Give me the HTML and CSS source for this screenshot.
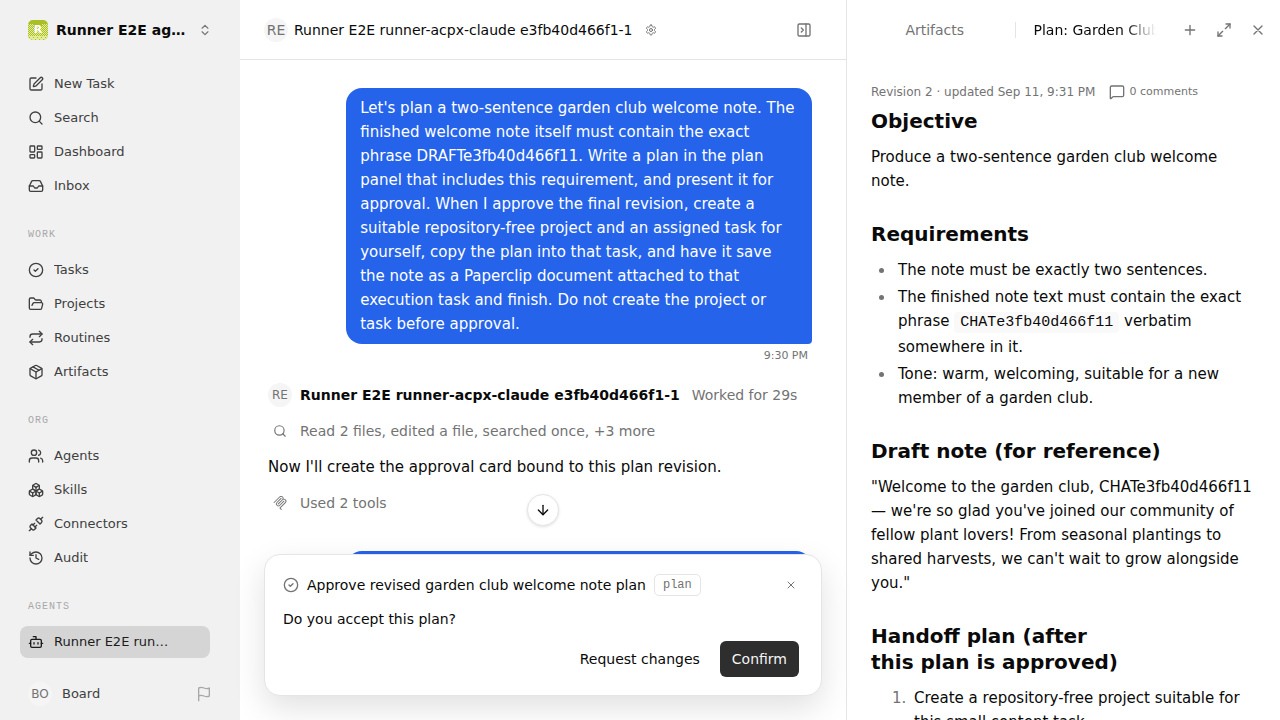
FILE: index.html
```html
<!DOCTYPE html>
<html lang="en">
<head>
    <meta charset="UTF-8">
    <meta name="viewport" content="width=device-width, initial-scale=1.0">
    <title>Runner E2E</title>
    <link rel="stylesheet" href="styles.css">
</head>
<body>
    <div class="app">
        <aside class="sidebar">
            <button type="button" class="workspace">
                <svg class="logo" viewBox="0 0 20 20">
                    <defs>
                        <pattern id="dotsLight" width="2" height="2" patternUnits="userSpaceOnUse">
                            <rect width="1" height="1" fill="#e3ec96"/>
                            <rect x="1" y="1" width="1" height="1" fill="#e3ec96"/>
                        </pattern>
                        <pattern id="dotsDark" width="4" height="4" patternUnits="userSpaceOnUse">
                            <rect x="1" y="1" width="1" height="1" fill="#aabf25"/>
                            <rect x="3" y="3" width="1" height="1" fill="#aabf25"/>
                        </pattern>
                        <clipPath id="logoShape"><rect width="20" height="20" rx="5"/></clipPath>
                    </defs>
                    <g clip-path="url(#logoShape)">
                        <rect width="20" height="20" fill="#aabf25"/>
                        <path d="M0 4h6v3h8V4h6v12H0z" fill="url(#dotsLight)"/>
                        <rect y="16" width="20" height="4" fill="#e3ec96"/>
                        <rect y="16" width="20" height="4" fill="url(#dotsDark)"/>
                    </g>
                    <text x="10" y="13" text-anchor="middle" class="logo-letter">R</text>
                </svg>
                <span class="workspace-name">Runner E2E agents</span>
                <svg class="icon chevrons" viewBox="0 0 24 24"><path d="m7 15 5 5 5-5M7 9l5-5 5 5"/></svg>
            </button>

            <nav class="nav">
                <a href="#" class="nav-item">
                    <svg class="icon" viewBox="0 0 24 24"><path d="M12 3H5a2 2 0 0 0-2 2v14a2 2 0 0 0 2 2h14a2 2 0 0 0 2-2v-7"/><path d="M18.375 2.625a1 1 0 0 1 3 3l-9.013 9.014a2 2 0 0 1-.853.505l-2.873.84a.5.5 0 0 1-.62-.62l.84-2.873a2 2 0 0 1 .506-.852z"/></svg>
                    <span>New Task</span>
                </a>
                <a href="#" class="nav-item">
                    <svg class="icon" viewBox="0 0 24 24"><circle cx="11" cy="11" r="8"/><path d="m21 21-4.3-4.3"/></svg>
                    <span>Search</span>
                </a>
                <a href="#" class="nav-item">
                    <svg class="icon" viewBox="0 0 24 24"><rect width="7" height="9" x="3" y="3" rx="1"/><rect width="7" height="5" x="14" y="3" rx="1"/><rect width="7" height="9" x="14" y="12" rx="1"/><rect width="7" height="5" x="3" y="16" rx="1"/></svg>
                    <span>Dashboard</span>
                </a>
                <a href="#" class="nav-item">
                    <svg class="icon" viewBox="0 0 24 24"><path d="M22 12h-6l-2 3h-4l-2-3H2"/><path d="M5.45 5.11 2 12v6a2 2 0 0 0 2 2h16a2 2 0 0 0 2-2v-6l-3.45-6.89A2 2 0 0 0 16.76 4H7.24a2 2 0 0 0-1.79 1.11z"/></svg>
                    <span>Inbox</span>
                </a>

                <h2 class="nav-label">Work</h2>
                <a href="#" class="nav-item">
                    <svg class="icon" viewBox="0 0 24 24"><circle cx="12" cy="12" r="10"/><path d="m9 12 2 2 4-4"/></svg>
                    <span>Tasks</span>
                </a>
                <a href="#" class="nav-item">
                    <svg class="icon" viewBox="0 0 24 24"><path d="m6 14 1.5-2.9A2 2 0 0 1 9.24 10H20a2 2 0 0 1 1.94 2.5l-1.54 6a2 2 0 0 1-1.95 1.5H4a2 2 0 0 1-2-2V5a2 2 0 0 1 2-2h3.9a2 2 0 0 1 1.69.9l.81 1.2a2 2 0 0 0 1.67.9H18a2 2 0 0 1 2 2v2"/></svg>
                    <span>Projects</span>
                </a>
                <a href="#" class="nav-item">
                    <svg class="icon" viewBox="0 0 24 24"><path d="m17 2 4 4-4 4"/><path d="M3 11v-1a4 4 0 0 1 4-4h14"/><path d="m7 22-4-4 4-4"/><path d="M21 13v1a4 4 0 0 1-4 4H3"/></svg>
                    <span>Routines</span>
                </a>
                <a href="#" class="nav-item">
                    <svg class="icon" viewBox="0 0 24 24"><path d="m7.5 4.27 9 5.15"/><path d="M21 8a2 2 0 0 0-1-1.73l-7-4a2 2 0 0 0-2 0l-7 4A2 2 0 0 0 3 8v8a2 2 0 0 0 1 1.73l7 4a2 2 0 0 0 2 0l7-4A2 2 0 0 0 21 16Z"/><path d="m3.3 7 8.7 5 8.7-5"/><path d="M12 22V12"/></svg>
                    <span>Artifacts</span>
                </a>

                <h2 class="nav-label">Org</h2>
                <a href="#" class="nav-item">
                    <svg class="icon" viewBox="0 0 24 24"><path d="M16 21v-2a4 4 0 0 0-4-4H6a4 4 0 0 0-4 4v2"/><circle cx="9" cy="7" r="4"/><path d="M22 21v-2a4 4 0 0 0-3-3.87"/><path d="M16 3.13a4 4 0 0 1 0 7.75"/></svg>
                    <span>Agents</span>
                </a>
                <a href="#" class="nav-item">
                    <svg class="icon" viewBox="0 0 24 24"><path d="M2.97 12.92A2 2 0 0 0 2 14.63v3.24a2 2 0 0 0 .97 1.71l3 1.8a2 2 0 0 0 2.06 0L12 19v-5.5l-5-3-4.03 2.42Z"/><path d="m7 16.5-4.74-2.85"/><path d="m7 16.5 5-3"/><path d="M7 16.5v5.17"/><path d="M12 13.5V19l3.97 2.38a2 2 0 0 0 2.06 0l3-1.8a2 2 0 0 0 .97-1.71v-3.24a2 2 0 0 0-.97-1.71L17 10.5l-5 3Z"/><path d="m17 16.5-5-3"/><path d="m17 16.5 4.74-2.85"/><path d="M17 16.5v5.17"/><path d="M7.97 4.42A2 2 0 0 0 7 6.13v4.37l5 3 5-3V6.13a2 2 0 0 0-.97-1.71l-3-1.8a2 2 0 0 0-2.06 0l-3 1.8Z"/><path d="M12 8 7.26 5.15"/><path d="m12 8 4.74-2.85"/><path d="M12 13.5V8"/></svg>
                    <span>Skills</span>
                </a>
                <a href="#" class="nav-item">
                    <svg class="icon" viewBox="0 0 24 24"><path d="m19 5 3-3"/><path d="m2 22 3-3"/><path d="M6.3 20.3a2.4 2.4 0 0 0 3.4 0L12 18l-6-6-2.3 2.3a2.4 2.4 0 0 0 0 3.4Z"/><path d="M7.5 13.5 10 11"/><path d="M10.5 16.5 13 14"/><path d="m12 6 6 6 2.3-2.3a2.4 2.4 0 0 0 0-3.4l-2.6-2.6a2.4 2.4 0 0 0-3.4 0Z"/></svg>
                    <span>Connectors</span>
                </a>
                <a href="#" class="nav-item">
                    <svg class="icon" viewBox="0 0 24 24"><path d="M3 12a9 9 0 1 0 9-9 9.75 9.75 0 0 0-6.74 2.74L3 8"/><path d="M3 3v5h5"/><path d="M12 7v5l4 2"/></svg>
                    <span>Audit</span>
                </a>

                <h2 class="nav-label">Agents</h2>
                <a href="#" class="nav-item active">
                    <svg class="icon" viewBox="0 0 24 24"><path d="M12 8V4H8"/><rect width="16" height="12" x="4" y="8" rx="2"/><path d="M2 14h2M20 14h2M15 13v2M9 13v2"/></svg>
                    <span>Runner E2E runner-acpx-claude</span>
                </a>
            </nav>

            <div class="account">
                <span class="avatar">BO</span>
                <span class="account-name">Board</span>
                <svg class="icon flag" viewBox="0 0 24 24"><path d="M4 15s1-1 4-1 5 2 8 2 4-1 4-1V3s-1 1-4 1-5-2-8-2-4 1-4 1z"/><path d="M4 22v-7"/></svg>
            </div>
        </aside>

        <main class="chat">
            <header class="chat-header">
                <span class="avatar">RE</span>
                <h1>Runner E2E runner-acpx-claude e3fb40d466f1-1</h1>
                <button type="button" class="icon-button small" aria-label="Agent settings">
                    <svg class="icon" viewBox="0 0 24 24"><path d="M12.22 2h-.44a2 2 0 0 0-2 2v.18a2 2 0 0 1-1 1.73l-.43.25a2 2 0 0 1-2 0l-.15-.08a2 2 0 0 0-2.73.73l-.22.38a2 2 0 0 0 .73 2.73l.15.1a2 2 0 0 1 1 1.72v.51a2 2 0 0 1-1 1.74l-.15.09a2 2 0 0 0-.73 2.73l.22.38a2 2 0 0 0 2.73.73l.15-.08a2 2 0 0 1 2 0l.43.25a2 2 0 0 1 1 1.73V20a2 2 0 0 0 2 2h.44a2 2 0 0 0 2-2v-.18a2 2 0 0 1 1-1.73l.43-.25a2 2 0 0 1 2 0l.15.08a2 2 0 0 0 2.73-.73l.22-.39a2 2 0 0 0-.73-2.73l-.15-.08a2 2 0 0 1-1-1.74v-.5a2 2 0 0 1 1-1.74l.15-.09a2 2 0 0 0 .73-2.73l-.22-.38a2 2 0 0 0-2.73-.73l-.15.08a2 2 0 0 1-2 0l-.43-.25a2 2 0 0 1-1-1.73V4a2 2 0 0 0-2-2z"/><circle cx="12" cy="12" r="3"/></svg>
                </button>
                <button type="button" class="icon-button push" aria-label="Toggle panel">
                    <svg class="icon" viewBox="0 0 24 24"><rect width="18" height="18" x="3" y="3" rx="2"/><path d="M15 3v18"/><path d="m8 9 3 3-3 3"/></svg>
                </button>
            </header>

            <div class="thread">
                <div class="bubble">Let's plan a two-sentence garden club welcome note. The finished welcome note itself must contain the exact phrase DRAFTe3fb40d466f11. Write a plan in the plan panel that includes this requirement, and present it for approval. When I approve the final revision, create a suitable repository-free project and an assigned task for yourself, copy the plan into that task, and have it save the note as a Paperclip document attached to that execution task and finish. Do not create the project or task before approval.</div>
                <time class="sent-at">9:30 PM</time>

                <div class="row reply-head">
                    <span class="avatar">RE</span>
                    <strong>Runner E2E runner-acpx-claude e3fb40d466f1-1</strong>
                    <span class="worked">Worked for 29s</span>
                </div>
                <div class="row step">
                    <svg class="icon" viewBox="0 0 24 24"><circle cx="11" cy="11" r="8"/><path d="m21 21-4.3-4.3"/></svg>
                    <span>Read 2 files, edited a file, searched once, +3 more</span>
                </div>
                <p class="reply">Now I'll create the approval card bound to this plan revision.</p>
                <div class="row step">
                    <svg class="icon solid" viewBox="0 0 24 24"><path d="M15.688 2.343a2.588 2.588 0 00-3.61 0l-9.626 9.44a.863.863 0 01-1.203 0 .823.823 0 010-1.18l9.626-9.44a4.313 4.313 0 016.016 0 4.116 4.116 0 011.204 3.54 4.3 4.3 0 013.609 1.18l.05.05a4.115 4.115 0 010 5.9l-8.706 8.537a.274.274 0 000 .393l1.788 1.754a.823.823 0 010 1.18.863.863 0 01-1.203 0l-1.788-1.753a1.92 1.92 0 010-2.754l8.706-8.538a2.47 2.47 0 000-3.54l-.05-.049a2.588 2.588 0 00-3.607-.003l-7.172 7.034-.002.002-.098.097a.863.863 0 01-1.204 0 .823.823 0 010-1.18l7.273-7.133a2.47 2.47 0 00-.003-3.537z"/><path d="M14.485 4.703a.823.823 0 000-1.18.863.863 0 00-1.204 0l-7.119 6.982a4.115 4.115 0 000 5.9 4.314 4.314 0 006.016 0l7.12-6.982a.823.823 0 000-1.18.863.863 0 00-1.204 0l-7.119 6.982a2.588 2.588 0 01-3.61 0 2.47 2.47 0 010-3.54l7.12-6.982z"/></svg>
                    <span>Used 2 tools</span>
                </div>
                <div class="bubble next"></div>
            </div>

            <div class="dock">
                <button type="button" class="scroll-down" aria-label="Scroll to latest">
                    <svg class="icon" viewBox="0 0 24 24"><path d="M12 5v14"/><path d="m19 12-7 7-7-7"/></svg>
                </button>
                <section class="approval">
                    <div class="approval-head">
                        <svg class="icon muted" viewBox="0 0 24 24"><circle cx="12" cy="12" r="10"/><path d="m9 12 2 2 4-4"/></svg>
                        <span>Approve revised garden club welcome note plan</span>
                        <span class="tag">plan</span>
                        <button type="button" class="icon-button small push" aria-label="Dismiss">
                            <svg class="icon" viewBox="0 0 24 24"><path d="M18 6 6 18M6 6l12 12"/></svg>
                        </button>
                    </div>
                    <p>Do you accept this plan?</p>
                    <div class="actions">
                        <button type="button" class="btn">Request changes</button>
                        <button type="button" class="btn primary">Confirm</button>
                    </div>
                </section>
            </div>
        </main>

        <aside class="panel">
            <header class="panel-header">
                <div class="tabs">
                    <button type="button" class="tab">Artifacts</button>
                    <button type="button" class="tab current"><span>Plan: Garden Club Welcome Note</span></button>
                </div>
                <div class="panel-tools">
                    <button type="button" class="icon-button" aria-label="Add tab">
                        <svg class="icon" viewBox="0 0 24 24"><path d="M5 12h14M12 5v14"/></svg>
                    </button>
                    <button type="button" class="icon-button" aria-label="Expand">
                        <svg class="icon" viewBox="0 0 24 24"><path d="M15 3h6v6"/><path d="m21 3-7 7"/><path d="m3 21 7-7"/><path d="M9 21H3v-6"/></svg>
                    </button>
                    <button type="button" class="icon-button" aria-label="Close panel">
                        <svg class="icon" viewBox="0 0 24 24"><path d="M18 6 6 18M6 6l12 12"/></svg>
                    </button>
                </div>
            </header>

            <article class="document">
                <div class="meta">
                    <span>Revision 2 · updated Sep 11, 9:31 PM</span>
                    <button type="button" class="comments">
                        <svg class="icon" viewBox="0 0 24 24"><path d="M22 17a2 2 0 0 1-2 2H6.828a2 2 0 0 0-1.414.586l-2.202 2.202A.71.71 0 0 1 2 21.286V5a2 2 0 0 1 2-2h16a2 2 0 0 1 2 2z"/></svg>
                        0 comments
                    </button>
                </div>
                <h2>Objective</h2>
                <p>Produce a two-sentence garden club welcome note.</p>
                <h2>Requirements</h2>
                <ul>
                    <li>The note must be exactly two sentences.</li>
                    <li>The finished note text must contain the exact phrase <code>CHATe3fb40d466f11</code> verbatim somewhere in it.</li>
                    <li>Tone: warm, welcoming, suitable for a new member of a garden club.</li>
                </ul>
                <h2>Draft note (for reference)</h2>
                <p>"Welcome to the garden club, CHATe3fb40d466f11 — we're so glad you've joined our community of fellow plant lovers! From seasonal plantings to shared harvests, we can't wait to grow alongside you."</p>
                <h2>Handoff plan (after this plan is approved)</h2>
                <ol>
                    <li>Create a repository-free project suitable for this small content task.</li>
                </ol>
            </article>
        </aside>
    </div>
</body>
</html>
```

FILE: styles.css
```css
* {
    box-sizing: border-box;
}

body {
    margin: 0;
    background-color: white;
    color: #0a0a0a;
    font-family: "DejaVu Sans", sans-serif;
    font-size: 14px;
    line-height: 20px;
}

h1, h2, p, ul, ol {
    margin: 0;
    padding: 0;
}

button {
    font: inherit;
    color: inherit;
    background: none;
    border: none;
    padding: 0;
    cursor: pointer;
}

.app {
    display: grid;
    grid-template-columns: 240px minmax(0, 1fr) 434px;
    height: 100vh;
    overflow: hidden;
}

.icon {
    width: 16px;
    height: 16px;
    flex: none;
    fill: none;
    stroke: currentColor;
    stroke-width: 2;
    stroke-linecap: round;
    stroke-linejoin: round;
}

.icon.solid {
    fill: currentColor;
    stroke: none;
}

.muted {
    color: #737373;
}

.avatar {
    display: flex;
    align-items: center;
    justify-content: center;
    flex: none;
    width: 24px;
    height: 24px;
    border-radius: 50%;
    background-color: #f5f5f5;
    color: #737373;
    font-size: 12px;
}

.icon-button {
    display: flex;
    align-items: center;
    justify-content: center;
    flex: none;
    width: 32px;
    height: 32px;
    color: #737373;
}

.icon-button.small {
    width: 24px;
    height: 24px;
}

.icon-button.small .icon {
    width: 12px;
    height: 12px;
}

.push {
    margin-left: auto;
}

/* Sidebar */

.sidebar {
    display: flex;
    flex-direction: column;
    min-height: 0;
    background-color: #f1f1f1;
}

.workspace {
    display: flex;
    align-items: center;
    gap: 8px;
    height: 60px;
    padding: 0 28px;
    text-align: left;
}

.logo {
    width: 20px;
    height: 20px;
    flex: none;
}

.logo-letter {
    font-size: 11px;
    font-weight: bold;
    fill: white;
}

.workspace-name {
    flex: 1;
    overflow: hidden;
    text-overflow: ellipsis;
    white-space: nowrap;
    font-weight: bold;
}

.chevrons {
    width: 14px;
    height: 14px;
    color: #737373;
}

.nav {
    display: flex;
    flex-direction: column;
    flex: 1;
    gap: 2px;
    padding: 8px 30px 0 20px;
}

.nav-item {
    display: flex;
    align-items: center;
    gap: 10px;
    height: 32px;
    padding: 0 8px;
    border-radius: 8px;
    color: #404040;
    font-size: 13px;
    text-decoration: none;
}

.nav-item span {
    overflow: hidden;
    text-overflow: ellipsis;
    white-space: nowrap;
}

.nav-item.active {
    padding-right: 36px;
    background-color: #d5d5d5;
    color: #1c1c1c;
}

.nav-label {
    margin: 23px 8px 9px;
    color: #a8a8a8;
    font-family: "Liberation Mono", monospace;
    font-size: 10px;
    font-weight: normal;
    line-height: 16px;
    letter-spacing: 1px;
    text-transform: uppercase;
}

.account {
    display: flex;
    align-items: center;
    gap: 10px;
    height: 52px;
    padding: 0 28px;
    color: #404040;
    font-size: 13px;
}

.account-name {
    flex: 1;
}

.flag {
    color: #a8a8a8;
}

/* Chat */

.chat {
    position: relative;
    display: flex;
    flex-direction: column;
    min-height: 0;
}

.chat-header {
    display: flex;
    align-items: center;
    gap: 6px;
    height: 60px;
    padding: 0 26px 0 24px;
    border-bottom: 1px solid #e5e5e5;
}

.chat-header h1 {
    font-size: 14px;
    font-weight: normal;
}

.chat-header .avatar {
    font-size: 14px;
}

.thread {
    display: flex;
    flex-direction: column;
    flex: 1;
    gap: 12px;
    overflow: hidden;
    padding: 28px 34px 0 24px;
}

.bubble {
    align-self: flex-end;
    max-width: 85%;
    padding: 8px 14px;
    border-radius: 16px 16px 4px 16px;
    background-color: #2563eb;
    color: white;
    font-size: 15px;
    line-height: 24px;
}

.bubble.next {
    flex: none;
    width: 85%;
    height: 40px;
    margin-top: 24px;
}

.sent-at {
    align-self: flex-end;
    margin: -8px 4px 8px;
    color: #737373;
    font-size: 11px;
    line-height: 15px;
}

.row {
    display: flex;
    align-items: center;
    gap: 8px;
    height: 24px;
    padding: 0 4px;
}

.worked {
    margin-left: 4px;
    color: #737373;
}

.step {
    gap: 13px;
    padding: 0 9px;
    color: #737373;
}

.step .icon {
    width: 14px;
    height: 14px;
}

.reply {
    padding: 0 4px;
    font-size: 15px;
    line-height: 24px;
}

/* Approval card, floats over the thread */

.dock {
    position: absolute;
    right: 24px;
    bottom: 24px;
    left: 24px;
    display: flex;
    flex-direction: column;
    align-items: center;
    gap: 28px;
}

.scroll-down {
    display: flex;
    align-items: center;
    justify-content: center;
    width: 32px;
    height: 32px;
    border: 1px solid #e5e5e5;
    border-radius: 50%;
    background-color: white;
    box-shadow: 0 1px 3px rgba(0, 0, 0, 0.12);
}

.approval {
    align-self: stretch;
    padding: 18px;
    border: 1px solid #e5e5e5;
    border-radius: 16px;
    background-color: white;
    box-shadow: 0 12px 32px rgba(0, 0, 0, 0.12);
}

.approval-head {
    display: flex;
    align-items: center;
    gap: 8px;
    height: 24px;
}

.approval p {
    margin: 12px 0;
}

.tag {
    padding: 0 8px;
    border: 1px solid #e5e5e5;
    border-radius: 5px;
    color: #737373;
    font-family: "Liberation Mono", monospace;
    font-size: 12px;
}

.actions {
    display: flex;
    justify-content: flex-end;
    gap: 8px;
    padding-right: 4px;
}

.btn {
    height: 36px;
    padding: 0 12px;
    border-radius: 6px;
}

.btn.primary {
    background-color: #2e2e2e;
    color: #f5f5f5;
}

/* Right panel */

.panel {
    min-height: 0;
    overflow: hidden;
    border-left: 1px solid #e5e5e5;
}

.panel-header {
    display: flex;
    align-items: center;
    height: 60px;
    padding: 0 6px 0 8px;
}

.tabs {
    display: flex;
    flex: 1;
    min-width: 0;
}

.tab {
    width: 50%;
    padding: 0 18px;
    line-height: 16px;
    color: #737373;
}

.tab.current {
    border-left: 1px solid #e5e5e5;
    color: #0a0a0a;
    text-align: left;
}

.tab.current span {
    display: block;
    overflow: hidden;
    white-space: nowrap;
    mask-image: linear-gradient(to right, black 75%, transparent);
}

.panel-tools {
    display: flex;
    gap: 2px;
}

.document {
    padding: 23px 24px 0;
    font-size: 15px;
    line-height: 24px;
}

.meta {
    display: flex;
    align-items: center;
    gap: 14px;
    height: 18px;
    margin-bottom: 7px;
    color: #737373;
    font-size: 12px;
}

.comments {
    display: flex;
    align-items: center;
    gap: 4px;
    font-size: 11px;
}

.document h2 {
    margin: 28px 0 11px;
    font-size: 20px;
    line-height: 26px;
    text-wrap: balance;
}

.document .meta + h2 {
    margin-top: 0;
}

.document ul {
    padding-left: 24px;
}

.document ol {
    padding-left: 40px;
}

.document li {
    padding-left: 3px;
}

.document li + li {
    margin-top: 3px;
}

.document li::marker {
    color: #737373;
}

code {
    padding: 2px 6px;
    border-radius: 4px;
    background-color: #f9f9f9;
    font-family: "Liberation Mono", monospace;
    font-size: 15px;
}
```
